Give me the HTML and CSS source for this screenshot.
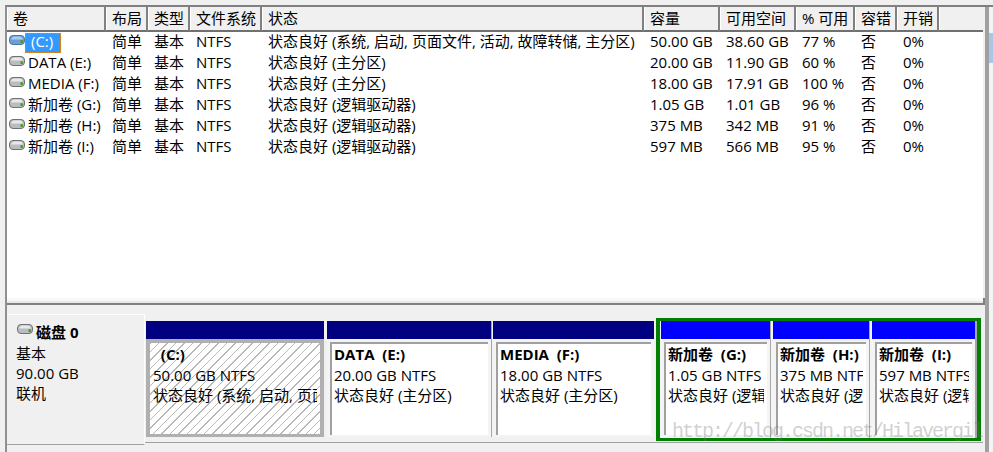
FILE: index.html
```html
<!DOCTYPE html>
<html lang="zh-CN">
<head>
<meta charset="utf-8">
<title>磁盘管理</title>
<link rel="stylesheet" href="styles.css">
</head>
<body>
<svg class="defs" width="0" height="0" aria-hidden="true">
  <symbol id="disk" viewBox="0 0 16 10">
    <rect class="d-body" x="0.5" y="0.5" width="15" height="9" rx="3.5"/>
    <path class="d-top" d="M2 4.6C2.6 2.4 4 1.5 5 1.5h6c1 0 2.4.9 3 3.1z"/>
    <rect class="d-led" x="11.5" y="5.2" width="2.5" height="2.8"/>
  </symbol>
</svg>
<div class="pane">
  <main class="main">
    <section class="list">
      <table class="vols">
        <colgroup>
          <col class="c-vol"><col class="c-lay"><col class="c-typ"><col class="c-fs"><col class="c-st"><col class="c-cap"><col class="c-free"><col class="c-pct"><col class="c-ft"><col class="c-ov"><col>
        </colgroup>
        <thead>
          <tr><th>卷</th><th>布局</th><th>类型</th><th>文件系统</th><th>状态</th><th>容量</th><th>可用空间</th><th>% 可用</th><th>容错</th><th>开销</th><th class="filler"></th></tr>
        </thead>
        <tbody>
          <tr><td class="vol"><svg class="ico sel-ico"><use href="#disk"/></svg><span class="sel">(C:)</span></td><td>简单</td><td>基本</td><td>NTFS</td><td>状态良好 (系统, 启动, 页面文件, 活动, 故障转储, 主分区)</td><td>50.00 GB</td><td>38.60 GB</td><td>77 %</td><td>否</td><td>0%</td><td></td></tr>
          <tr><td class="vol"><svg class="ico"><use href="#disk"/></svg>DATA (E:)</td><td>简单</td><td>基本</td><td>NTFS</td><td>状态良好 (主分区)</td><td>20.00 GB</td><td>11.90 GB</td><td>60 %</td><td>否</td><td>0%</td><td></td></tr>
          <tr><td class="vol"><svg class="ico"><use href="#disk"/></svg>MEDIA (F:)</td><td>简单</td><td>基本</td><td>NTFS</td><td>状态良好 (主分区)</td><td>18.00 GB</td><td>17.91 GB</td><td>100 %</td><td>否</td><td>0%</td><td></td></tr>
          <tr><td class="vol"><svg class="ico"><use href="#disk"/></svg>新加卷 (G:)</td><td>简单</td><td>基本</td><td>NTFS</td><td>状态良好 (逻辑驱动器)</td><td>1.05 GB</td><td>1.01 GB</td><td>96 %</td><td>否</td><td>0%</td><td></td></tr>
          <tr><td class="vol"><svg class="ico"><use href="#disk"/></svg>新加卷 (H:)</td><td>简单</td><td>基本</td><td>NTFS</td><td>状态良好 (逻辑驱动器)</td><td>375 MB</td><td>342 MB</td><td>91 %</td><td>否</td><td>0%</td><td></td></tr>
          <tr><td class="vol"><svg class="ico"><use href="#disk"/></svg>新加卷 (I:)</td><td>简单</td><td>基本</td><td>NTFS</td><td>状态良好 (逻辑驱动器)</td><td>597 MB</td><td>566 MB</td><td>95 %</td><td>否</td><td>0%</td><td></td></tr>
        </tbody>
      </table>
    </section>
    <div class="sash"></div>
    <section class="disks">
      <div class="label">
        <div class="label-title"><svg class="ico"><use href="#disk"/></svg><b>磁盘 0</b></div>
        <div>基本</div>
        <div>90.00 GB</div>
        <div>联机</div>
      </div>
      <div class="parts">
        <article class="part p-c selected">
          <div class="bar"></div>
          <div class="box"><div class="inner"><b class="name">  (C:)</b><span>50.00 GB NTFS</span><span>状态良好 (系统, 启动, 页面文件, 活动, 故障转储, 主分区)</span></div></div>
        </article>
        <article class="part p-e">
          <div class="bar"></div>
          <div class="box"><div class="inner"><b class="name">DATA  (E:)</b><span>20.00 GB NTFS</span><span>状态良好 (主分区)</span></div></div>
        </article>
        <article class="part p-f">
          <div class="bar"></div>
          <div class="box"><div class="inner"><b class="name">MEDIA  (F:)</b><span>18.00 GB NTFS</span><span>状态良好 (主分区)</span></div></div>
        </article>
        <div class="group">
          <article class="part p-g logical">
            <div class="bar"></div>
            <div class="box"><div class="inner"><b class="name">新加卷  (G:)</b><span>1.05 GB NTFS</span><span>状态良好 (逻辑驱动器)</span></div></div>
          </article>
          <article class="part p-h logical">
            <div class="bar"></div>
            <div class="box"><div class="inner"><b class="name">新加卷  (H:)</b><span>375 MB NTFS</span><span>状态良好 (逻辑驱动器)</span></div></div>
          </article>
          <article class="part p-i logical">
            <div class="bar"></div>
            <div class="box"><div class="inner"><b class="name">新加卷  (I:)</b><span>597 MB NTFS</span><span>状态良好 (逻辑驱动器)</span></div></div>
          </article>
        </div>
      </div>
    </section>
  </main>
  <div class="edge"></div>
  <div class="strip"><div class="thumb"></div></div>
</div>
<div class="watermark">http://blog.csdn.net/Hilavergil</div>
</body>
</html>
```
FILE: styles.css
```css
html, body {
  margin: 0;
  height: 452px;
  overflow: hidden;
  background: #f0f0f0;
  color: #000;
  font: 15px/21px "Open Sans", "Noto Sans CJK SC", sans-serif;
}
body { position: relative; }
.defs { position: absolute; }

.pane {
  display: flex;
  height: 447px;
  margin: 5px 0 0 5px;
  border-top: 2px solid #808080;
  border-left: 2px solid #909090;
  box-sizing: border-box;
}
.main {
  width: 978px;
  padding-right: 2px;
  box-sizing: border-box;
  display: flex;
  flex-direction: column;
}
.edge {
  width: 4px;
  background: #a0a0a0;
}
.strip {
  flex: 1;
  background: #f4f4f4;
  padding-top: 26px;
}
.thumb {
  height: 30px;
  background: #a9c6e6;
}

/* volume list */
.list {
  height: 291px;
  flex: none;
  background: #fff;
}
.vols {
  width: 976px;
  table-layout: fixed;
  border-collapse: separate;
  border-spacing: 0;
}
.c-vol { width: 99px; }
.c-lay { width: 42px; }
.c-typ { width: 42px; }
.c-fs { width: 72px; }
.c-st { width: 382px; }
.c-cap { width: 76px; }
.c-free { width: 76px; }
.c-pct { width: 59px; }
.c-ft { width: 42px; }
.c-ov { width: 42px; }
th {
  height: 23px;
  padding: 0 0 0 6px;
  font-weight: 400;
  text-align: left;
  white-space: nowrap;
  background: #f0f0f0;
  border-right: 2px solid #808080;
  border-bottom: 2px solid #707070;
  box-shadow: inset 1px 0 #fff;
}
th.filler { border-right: 0; }
td {
  height: 21px;
  padding: 0 0 0 6px;
  line-height: 19px;
  vertical-align: top;
  white-space: nowrap;
}
td.vol { padding-left: 2px; }
.ico {
  width: 16px;
  height: 10px;
  flex: none;
}
.d-body { fill: var(--disk-body, #b9bdbf); stroke: var(--disk-line, #6f7274); stroke-width: 1; }
.d-top { fill: var(--disk-top, #e8e8e8); }
.d-led { fill: #4f9a2e; }
td.vol .ico { margin-right: 3px; vertical-align: 2px; }
.sel-ico {
  --disk-body: #6c9fd3;
  --disk-line: #4a78a8;
  --disk-top: #a9cbee;
}
.sel {
  display: inline-block;
  width: 36px;
  height: 20px;
  box-sizing: border-box;
  padding-left: 6px;
  margin-left: -3px;
  margin-top: 1px;
  background: #3399ff;
  color: #fff;
  outline: 1px dotted #d98a2b;
  outline-offset: -1px;
  line-height: 17px;
  vertical-align: top;
}

/* sash */
.sash {
  height: 7px;
  flex: none;
  box-sizing: border-box;
  background: linear-gradient(#f8f8f8 0 3px, #e8e8e8 3px);
  border-bottom: 2px solid #808080;
  border-right: 2px solid #808080;
  margin-right: -2px;
}

/* lower pane */
.disks {
  display: flex;
  flex: none;
  height: 139px;
  padding-top: 9px;
  box-sizing: border-box;
  align-items: flex-start;
}
.label {
  width: 138px;
  height: 131px;
  flex: none;
  box-sizing: border-box;
  padding: 7px 0 0 9px;
  line-height: 20px;
  border-top: 1px solid #fff;
  border-bottom: 1px solid #a0a0a0;
  border-right: 1px solid #fff;
}
.label-title {
  display: flex;
  align-items: center;
  gap: 3px;
  padding-left: 1px;
  margin-bottom: 1px;
}
.label-title .ico { margin-top: -6px; }
.parts {
  display: flex;
  align-items: flex-start;
  margin-top: 4px;
  padding-left: 1px;
  height: 125px;
  width: 838px;
  box-sizing: border-box;
  border-bottom: 1px solid #a0a0a0;
}
.part {
  flex: none;
  margin-top: 3px;
  margin-right: 3px;
  box-shadow: 1px 0 #a8a8a8;
}
.bar {
  height: 18px;
  background: #000080;
}
.box {
  height: 98px;
  box-sizing: border-box;
  padding: 3px 3px 2px;
  background: #f4f4f4;
}
.inner {
  height: 100%;
  box-sizing: border-box;
  padding: 0 0 0 2px;
  background: #fff;
  border-top: 2px solid #a0a0a0;
  border-left: 2px solid #a0a0a0;
  overflow: hidden;
  display: flex;
  flex-direction: column;
  line-height: 20.5px;
}
.inner span, .inner .name {
  white-space: pre;
  overflow: hidden;
  margin-right: 3px;
  flex: none;
}
.name { font-weight: 700; }

.p-c { width: 178px; box-shadow: none; }
.p-e { width: 164px; margin-right: 2px; }
.p-f { width: 161px; margin-right: 2px; box-shadow: none; }
.p-g { width: 109px; }
.p-h { width: 96px; }
.p-i { width: 103px; margin-right: 0; box-shadow: 2px 0 #a8a8a8; }

.selected .box {
  padding: 0;
  border: 4px solid #b0b0b0;
  border-bottom-width: 3px;
  background: repeating-linear-gradient(135deg, #b8b8b8 0 1px, #fff 1px 6px);
}
.selected .inner {
  background: none;
  border: 0;
  padding: 0 0 0 3px;
}
.selected .name { margin-top: 1px; }
.group {
  display: flex;
  flex: none;
  width: 325px;
  height: 123px;
  box-sizing: border-box;
  border: solid #008000;
  border-width: 3px 4px;
  padding-left: 1px;
  background: #f4f4f4;
}
.group .part { margin-top: 0; }
.logical .bar { background: #0000ff; }

.watermark {
  position: absolute;
  left: 672px;
  top: 420px;
  font: 20px/24px "Liberation Mono", monospace;
  letter-spacing: -2px;
  color: rgba(120, 120, 120, .35);
  white-space: nowrap;
  pointer-events: none;
}
```
